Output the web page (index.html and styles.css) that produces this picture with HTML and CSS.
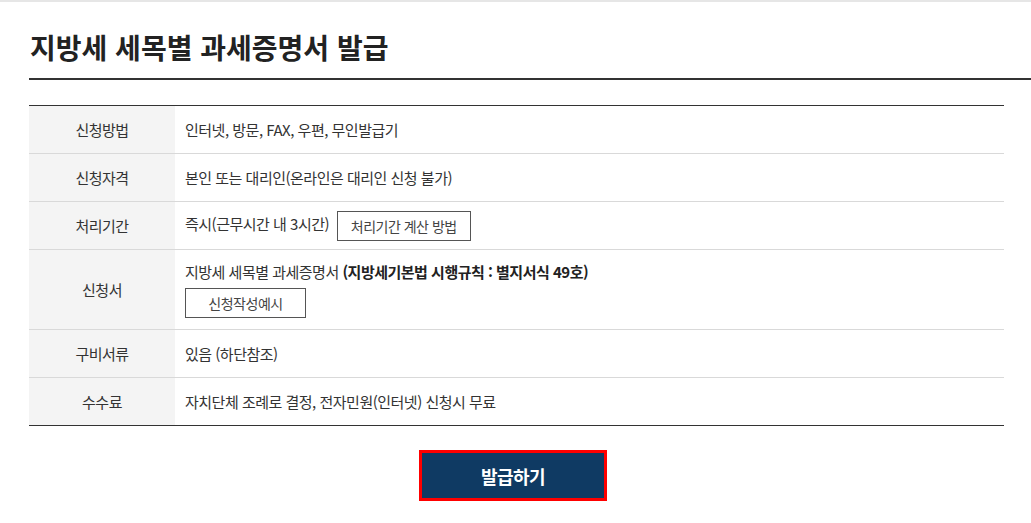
FILE: index.html
```html
<!DOCTYPE html>
<html lang="ko">
<head>
    <meta charset="UTF-8">
    <meta name="viewport" content="width=device-width, initial-scale=1.0">
    <title>지방세 세목별 과세증명서 발급</title>
    <link rel="stylesheet" href="styles.css">
</head>
<body>
    <div class="page">
        <h1 class="page-title">지방세 세목별 과세증명서 발급</h1>

        <table class="info-table">
            <tr>
                <th>신청방법</th>
                <td>인터넷, 방문, FAX, 우편, 무인발급기</td>
            </tr>
            <tr>
                <th>신청자격</th>
                <td>본인 또는 대리인(온라인은 대리인 신청 불가)</td>
            </tr>
            <tr>
                <th>처리기간</th>
                <td>즉시(근무시간 내 3시간) <a href="#" class="btn-line">처리기간 계산 방법</a></td>
            </tr>
            <tr class="tall">
                <th>신청서</th>
                <td>
                    <p>지방세 세목별 과세증명서 <strong>(지방세기본법 시행규칙 : 별지서식 49호)</strong></p>
                    <a href="#" class="btn-line btn-wide">신청작성예시</a>
                </td>
            </tr>
            <tr>
                <th>구비서류</th>
                <td>있음 (하단참조)</td>
            </tr>
            <tr>
                <th>수수료</th>
                <td>자치단체 조례로 결정, 전자민원(인터넷) 신청시 무료</td>
            </tr>
        </table>

        <div class="actions">
            <button type="button" class="btn-issue">발급하기</button>
        </div>
    </div>
</body>
</html>
```

FILE: styles.css
```css
* {
    margin: 0;
    padding: 0;
    box-sizing: border-box;
}

body {
    font-family: "Noto Sans CJK KR", "Noto Sans", sans-serif;
    color: #333;
    background: #fff;
    border-top: 2px solid #e6e6e6;
}

.page {
    padding: 0 0 0 29px;
}

.page-title {
    width: 1002px;
    margin-top: 24px;
    padding-bottom: 10px;
    padding-left: 1px;
    border-bottom: 2px solid #333;
    font-size: 28px;
    font-weight: 700;
    letter-spacing: 0;
    line-height: 42px;
    color: #222;
}

.info-table {
    width: 975px;
    margin-top: 25px;
    border-collapse: collapse;
    border-top: 1px solid #333;
    border-bottom: 1px solid #333;
    font-size: 15px;
    letter-spacing: -0.5px;
}

.info-table th,
.info-table td {
    height: 48px;
    border-bottom: 1px solid #d9d9d9;
    text-align: left;
    vertical-align: middle;
}

.info-table tr:last-child th,
.info-table tr:last-child td {
    border-bottom: none;
}

.info-table th {
    width: 146px;
    background: #f4f4f4;
    font-weight: 400;
    text-align: center;
    color: #333;
}

.info-table td {
    padding-left: 10px;
    color: #333;
}

.info-table tr.tall th,
.info-table tr.tall td {
    height: 80px;
}

.info-table td p {
    margin-bottom: 6px;
}

.info-table strong {
    font-weight: 700;
    color: #222;
}

.btn-line {
    display: inline-block;
    height: 30px;
    padding: 0 13px;
    margin-left: 4px;
    border: 1px solid #555;
    line-height: 28px;
    font-size: 14px;
    color: #444;
    text-decoration: none;
    vertical-align: middle;
}

.btn-wide {
    margin-left: 0;
    width: 121px;
    text-align: center;
}

.actions {
    width: 975px;
    display: flex;
    justify-content: center;
    padding-top: 24px;
}

.btn-issue {
    width: 188px;
    height: 51px;
    margin-left: -7px;
    border: 3px solid #f00;
    background: #0f3a63;
    color: #fff;
    font-family: inherit;
    font-size: 18px;
    font-weight: 700;
    letter-spacing: -0.5px;
    cursor: pointer;
}
```
